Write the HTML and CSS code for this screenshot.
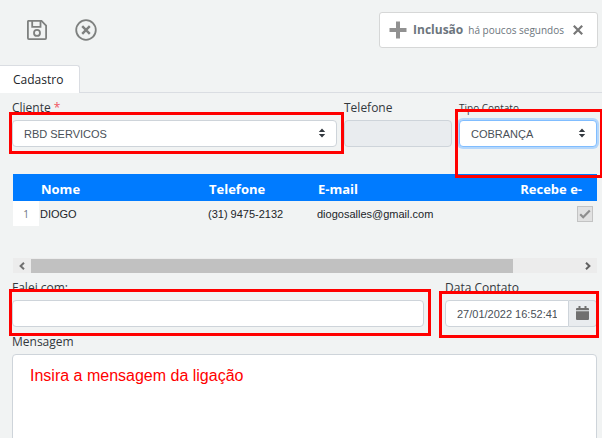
FILE: index.html
```html
<!DOCTYPE html>
<html lang="pt-BR">
<head>
<meta charset="utf-8">
<title>Cadastro</title>
<link rel="stylesheet" href="styles.css">
</head>
<body>
<header class="toolbar">
  <button class="tool" type="button" aria-label="Salvar">
    <svg width="20" height="20" viewBox="0 0 20 20" fill="none" stroke="currentColor" stroke-width="1.8"><path d="M1.5.9h13l4.6 4.600v12.600a1 1 0 0 1-1 1H1.900a1 1 0 0 1-1-1V1.900a1 1 0 0 1 .6-1z"/><path d="M5.200 1v5.900h8.300V1"/><circle cx="10" cy="12.900" r="3"/></svg>
  </button>
  <button class="tool" type="button" aria-label="Cancelar">
    <svg width="22" height="22" viewBox="0 0 22 22" fill="none" stroke="currentColor"><circle cx="11" cy="11" r="9.800" stroke-width="1.800"/><path d="M7.200 7.200l7.600 7.600M14.800 7.200l-7.600 7.600" stroke-width="2.400"/></svg>
  </button>
  <div class="notice" role="status">
    <svg width="18" height="18" viewBox="0 0 18 18" fill="none" stroke="#919191" stroke-width="4"><path d="M9 .5v17M.5 9h17"/></svg>
    <strong class="notice-title">Inclusão</strong>
    <small class="notice-time">há poucos segundos</small>
    <button class="notice-close" type="button" aria-label="Fechar">
      <svg width="10" height="10" viewBox="0 0 10 10" fill="none" stroke="currentColor" stroke-width="2.2"><path d="M.8.8l8.4 8.4M9.2.8L.8 9.2"/></svg>
    </button>
  </div>
</header>
<nav class="tabs"><a class="tab" href="#cadastro">Cadastro</a></nav>
<form class="form" id="cadastro">
  <div class="row row-client">
    <div class="field">
      <label for="cliente">Cliente <span class="required">*</span></label>
      <div class="control">
        <select id="cliente"><option>RBD SERVICOS</option></select>
        <svg class="arrows" width="8" height="10" viewBox="0 0 8 10" fill="#343a40"><path d="M4 .5L7.2 4H.8zM4 9.5L.8 6h6.4z"/></svg>
      </div>
      <span class="mark mark-client"></span>
    </div>
    <div class="field">
      <label for="telefone">Telefone</label>
      <input id="telefone" type="text" disabled>
    </div>
    <div class="field">
      <label class="label-small" for="tipo">Tipo Contato</label>
      <div class="control">
        <select class="active" id="tipo"><option>COBRANÇA</option></select>
        <svg class="arrows" width="8" height="10" viewBox="0 0 8 10" fill="#343a40"><path d="M4 .5L7.2 4H.8zM4 9.5L.8 6h6.4z"/></svg>
      </div>
      <span class="mark mark-type"></span>
    </div>
  </div>

  <div class="grid">
    <table>
      <colgroup><col class="col-number"><col class="col-name"><col class="col-phone"><col class="col-mail"><col></colgroup>
      <thead><tr><th></th><th>Nome</th><th>Telefone</th><th>E-mail</th><th class="receives">Recebe e-</th></tr></thead>
      <tbody><tr>
        <td class="number">1</td><td>DIOGO</td><td>(31) 9475-2132</td><td>diogosalles@gmail.com</td>
        <td class="check"><span class="box"><input type="checkbox" aria-label="Recebe e-mail" checked disabled><svg width="12" height="10" viewBox="0 0 12 10" fill="none" stroke="#8e8e8e" stroke-width="2.2"><path d="M1.2 5.2l3 3L10.8 1.4"/></svg></span></td>
      </tr></tbody>
    </table>
    <div class="scrollbar">
      <button type="button" aria-label="Rolar para a esquerda"><svg width="6" height="8" viewBox="0 0 6 8" fill="none" stroke="#707070" stroke-width="2"><path d="M5 .8L1.6 4 5 7.2"/></svg></button>
      <div class="track"><div class="thumb"></div></div>
      <button type="button" aria-label="Rolar para a direita"><svg width="6" height="8" viewBox="0 0 6 8" fill="none" stroke="#606060" stroke-width="2"><path d="M1 .8L4.4 4 1 7.2"/></svg></button>
    </div>
  </div>

  <div class="row row-contact">
    <div class="field">
      <label for="falei">Falei com:</label>
      <input id="falei" type="text">
      <span class="mark mark-person"></span>
    </div>
    <div class="field">
      <label for="data">Data Contato</label>
      <div class="date">
        <input id="data" type="text" value="27/01/2022 16:52:41">
        <button type="button" aria-label="Abrir calendário"><svg width="13" height="15" viewBox="0 0 13 15" fill="#707070"><path d="M2.5 0h2v2h4V0h2v2H12a1 1 0 0 1 1 1v1.2H0V3a1 1 0 0 1 1-1h1.5zM0 5.2h13V13a1 1 0 0 1-1 1H1a1 1 0 0 1-1-1z"/></svg></button>
      </div>
      <span class="mark mark-date"></span>
    </div>
  </div>
  <div class="field message">
    <label for="mensagem">Mensagem</label>
    <textarea id="mensagem" rows="6">Insira a mensagem da ligação</textarea>
  </div>
</form>
</body>
</html>
```
FILE: styles.css
```css
* { box-sizing: border-box; }
html { height: 100vh; overflow: hidden; }
body {
  margin: 0;
  min-height: 100vh;
  overflow: hidden;
  background: #f1f3f3;
  color: #33383d;
  font: 13px/20px "Open Sans", "Noto Sans", sans-serif;
}
svg { display: block; flex: none; }
button { margin: 0; padding: 0; border: 0; background: none; font: inherit; }

.toolbar {
  display: flex;
  align-items: center;
  gap: 28px;
  height: 65px;
  padding: 0 4px 6px 27px;
}
.tool { color: #7e807f; }
.notice {
  display: flex;
  align-items: center;
  height: 36px;
  margin-left: auto;
  padding: 0 14px 0 9px;
  border: 1px solid #d6d7d7;
  border-radius: 3px;
  background: #fff;
  color: #6c757d;
}
.notice-title { margin-left: 6px; font-size: 12px; }
.notice-time { margin: 0 9px 0 5px; font-size: 10px; }
.notice-close { color: #777; }

.tabs { display: flex; height: 28px; border-bottom: 1px solid #dadde2; }
.tab {
  height: 28px;
  padding: 4px 16px 0 13px;
  border: 1px solid #dadde2;
  border-width: 1px 1px 0 0;
  border-radius: 0 3px 0 0;
  background: #fff;
  color: #212529;
  font-size: 12px;
  text-decoration: none;
}

.form { padding: 5px 5px 0 12px; }
.row { display: grid; gap: 7px; }
.row-client { grid-template-columns: 325fr 108fr 138fr; }
.row-contact { grid-template-columns: 412fr 152fr; gap: 21px; }
.field { position: relative; min-width: 0; }
.message { margin-top: 5px; }
label { display: block; height: 22px; font-size: 12px; white-space: nowrap; }
.label-small { font-size: 10px; }
.required { color: #f0525f; }
.control { position: relative; }

input[type="text"], select, textarea {
  display: block;
  width: 100%;
  height: 27px;
  margin: 0;
  padding: 0 11px;
  border: 1px solid #ced4da;
  border-radius: 4px;
  outline: 0;
  background: #fff;
  color: #495057;
  font: 11px "Liberation Sans", Arial, sans-serif;
}
select { appearance: none; }
select.active { border-color: #80bdff; box-shadow: 0 0 0 2px #b5d7fb; }
input[type="text"]:disabled { background: #e9ecef; }
.arrows { position: absolute; top: 8px; right: 11px; pointer-events: none; }
textarea {
  height: 160px;
  padding: 12px 17px;
  resize: none;
  color: #f00;
  font-size: 16px;
}
.date { display: flex; }
.date input[type="text"] { flex: 1; min-width: 0; border-radius: 4px 0 0 4px; }
.date button {
  display: grid;
  place-items: center;
  width: 28px;
  border: 1px solid #ced4da;
  border-left: 0;
  border-radius: 0 4px 4px 0;
  background: #e9ecef;
}

/* Highlight frames laid over the fields */
.mark { position: absolute; z-index: 1; border: 3px solid #f00; pointer-events: none; }
.mark-client { inset: 14px -7px -7px -3px; }
.mark-type { inset: 11px -6px -31px -4px; }
.mark-person { inset: 11px -7px -9px -3px; }
.mark-date { inset: 13px -2px -11px -6px; }

.grid { display: flex; flex-direction: column; height: 99px; margin: 27px 0 5px; padding-left: 1px; }
table { width: 100%; border-collapse: collapse; table-layout: fixed; }
.col-number { width: 26px; }
.col-name { width: 168px; }
.col-phone { width: 109px; }
.col-mail { width: 171px; }
th {
  height: 27px;
  padding: 3px 2px 0;
  background: #007bff;
  color: #fff;
  font-size: 13px;
  text-align: left;
}
th.receives { padding-right: 15px; text-align: right; }
td {
  height: 25px;
  padding: 0 1px;
  color: #212529;
  font: 11px "Liberation Sans", Arial, sans-serif;
}
td.number { background: #fff; color: #6c757d; font: 10px "Open Sans", sans-serif; text-align: center; }
td.check { padding-right: 4px; }
.box { position: relative; display: block; width: 16px; height: 16px; margin-left: auto; }
.box input { appearance: none; display: block; width: 16px; height: 16px; margin: 0; border: 1px solid #c3c3c3; background: #e1e1e1; }
.box svg { position: absolute; top: 3px; left: 2px; }

.scrollbar { display: flex; height: 15px; margin-top: auto; background: #ececec; }
.scrollbar button { display: grid; place-items: center; width: 18px; }
.track { flex: 1; padding: 1px 0; }
.thumb { width: 88%; height: 14px; background: #c1c1c1; }
```
